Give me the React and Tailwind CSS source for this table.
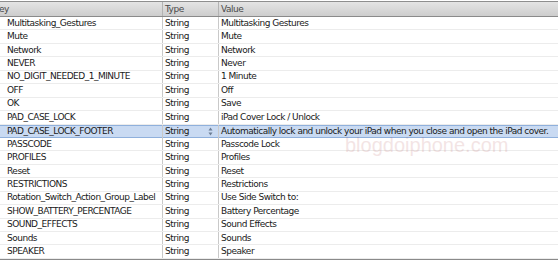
import React from "react";

const rows = [
  ["Multitasking_Gestures", "Multitasking Gestures"],
  ["Mute", "Mute"],
  ["Network", "Network"],
  ["NEVER", "Never"],
  ["NO_DIGIT_NEEDED_1_MINUTE", "1 Minute"],
  ["OFF", "Off"],
  ["OK", "Save"],
  ["PAD_CASE_LOCK", "iPad Cover Lock / Unlock"],
  ["PAD_CASE_LOCK_FOOTER", "Automatically lock and unlock your iPad when you close and open the iPad cover."],
  ["PASSCODE", "Passcode Lock"],
  ["PROFILES", "Profiles"],
  ["Reset", "Reset"],
  ["RESTRICTIONS", "Restrictions"],
  ["Rotation_Switch_Action_Group_Label", "Use Side Switch to:"],
  ["SHOW_BATTERY_PERCENTAGE", "Battery Percentage"],
  ["SOUND_EFFECTS", "Sound Effects"],
  ["Sounds", "Sounds"],
  ["SPEAKER", "Speaker"],
];

const SELECTED = 8;

function Stepper() {
  return (
    <svg width="5" height="9" viewBox="0 0 5 9" className="shrink-0">
      <path d="M2.5 0.5 L4.5 3.5 L0.5 3.5 Z" fill="#6b7c93" />
      <path d="M2.5 8.5 L4.5 5.5 L0.5 5.5 Z" fill="#6b7c93" />
    </svg>
  );
}

function Row({ keyName, value, selected }) {
  return (
    <div
      className={
        "grid grid-cols-[163px_56px_1fr] h-[13.45px] items-stretch " +
        (selected
          ? "bg-[#c9daf2] shadow-[inset_0_1px_0_#8fb0dc,inset_0_-1px_0_#8fb0dc]"
          : "border-b border-[#ececec]")
      }
    >
      <div className="border-r border-[#c9c9c9] pl-[7px] flex items-center overflow-hidden whitespace-nowrap">
        {keyName}
      </div>
      <div className="border-r border-[#c9c9c9] pl-[2px] pr-[5px] flex items-center justify-between overflow-hidden whitespace-nowrap">
        <span>String</span>
        {selected && <Stepper />}
      </div>
      <div className="pl-[2px] flex items-center overflow-hidden whitespace-nowrap">
        {value}
      </div>
    </div>
  );
}

export default function App() {
  return (
    <div
      className="relative w-[558px] h-[260px] bg-white overflow-hidden text-[9px] tracking-[-0.5px] text-[#1a1a1a] leading-none"
      style={{ fontFamily: '"DejaVu Sans", "Liberation Sans", sans-serif' }}
    >
      {/* column header bar */}
      <div className="h-[16px] border-t border-t-[#8e8e8e] mt-px border-b border-b-[#8a8a8a] bg-gradient-to-b from-[#e4e4e4] to-[#cdcdcd] grid grid-cols-[163px_56px_1fr] text-[#4a4a4a]">
        <div className="border-r border-[#b3b3b3] flex items-center overflow-hidden whitespace-nowrap">
          <span className="-ml-[6px]">Key</span>
        </div>
        <div className="border-r border-[#b3b3b3] pl-[2px] flex items-center">Type</div>
        <div className="pl-[2px] flex items-center">Value</div>
      </div>

      {/* property rows */}
      <div className="border-b border-[#8a8a8a]">
        {rows.map(([k, v], i) => (
          <Row key={k} keyName={k} value={v} selected={i === SELECTED} />
        ))}
      </div>

      {/* site watermark */}
      <div
        className="absolute left-[345px] top-[135px] text-[20px] tracking-normal text-[#b04848] opacity-[0.14] pointer-events-none"
        style={{ fontFamily: '"Liberation Sans", sans-serif' }}
      >
        blogdoiphone.com
      </div>
    </div>
  );
}
